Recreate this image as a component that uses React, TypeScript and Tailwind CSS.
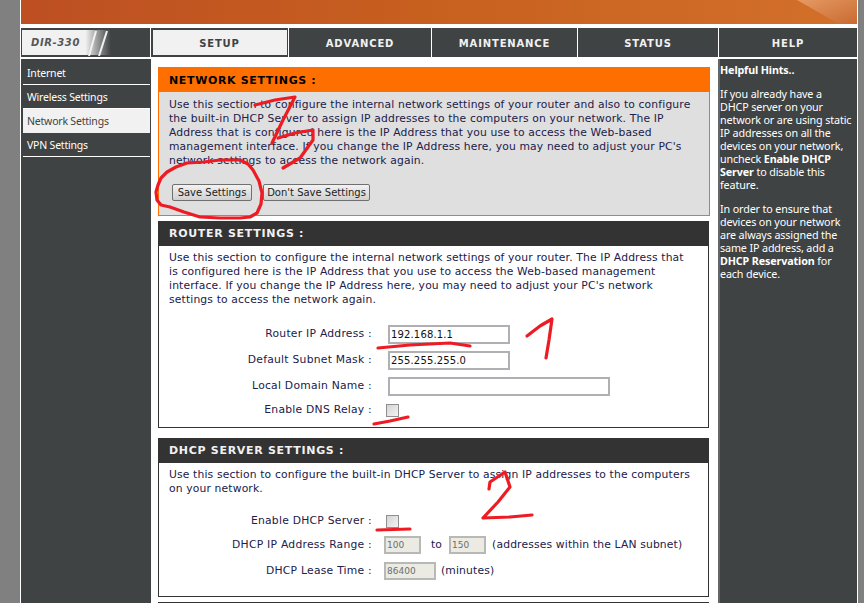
import React from "react";

const font = "font-['DejaVu_Sans',sans-serif]";

function Lines({ lines }: { lines: string[] }) {
  return (
    <>
      {lines.map((l) => (
        <span key={l} className="block whitespace-nowrap">{l}</span>
      ))}
    </>
  );
}

function NavItem({ label, w }: { label: string; w: string }) {
  return (
    <div className={`${w} flex items-center justify-center border-r border-white pt-[2px] text-[10px] font-bold tracking-[0.85px] text-[#f1f1f1]`}>
      {label}
    </div>
  );
}

function SideItem({ label, active }: { label: string; active?: boolean }) {
  return (
    <div className={`h-[24px] w-[127px] pl-[4px] pt-[1px] flex items-center border-b font-['Noto_Sans',sans-serif] text-[10.5px] tracking-[-0.2px] ${active ? "bg-[#f1f1f1] text-[#404343] border-[#f1f1f1]" : "text-white border-white"}`}>
      {label}
    </div>
  );
}

function FormRow({ label, h, ml = "ml-[14px]", children }: { label: string; h: string; ml?: string; children: React.ReactNode }) {
  return (
    <div className={`flex items-center ${h}`}>
      <div className="w-[215px] pr-[2px] text-right whitespace-nowrap tracking-[0.25px]">{label} :</div>
      <div className={`${ml} flex items-center`}>{children}</div>
    </div>
  );
}

function TextBox({ value, w }: { value?: string; w: string }) {
  return <div className={`${w} h-[19px] border-2 border-[#b0b0b4] bg-white pl-[1px] leading-[15px] text-[10px] tracking-[0.15px] text-[#111]`}>{value}</div>;
}

function Disabled({ value, w }: { value: string; w: string }) {
  return <div className={`${w} h-[18px] border-2 border-[#b8b8b4] bg-[#ebebe4] pl-[1px] leading-[15px] text-[9px] tracking-normal text-[#6d6d6d]`}>{value}</div>;
}

function Check() {
  return <div className="h-[13px] w-[13px] border border-[#8e8f8f] bg-gradient-to-br from-[#d4d4d4] to-[#f4f4f4]" />;
}

function Section({ title, className, children }: { title: string; className: string; children: React.ReactNode }) {
  return (
    <section className={`${className} w-[551px] border border-[#333] bg-white`}>
      <h2 className="-mx-px -mt-px box-content flex h-[24px] items-center bg-[#333] pl-[11px] pt-px text-[11px] font-bold tracking-[0.7px] text-[#f1f1f1]">{title}</h2>
      {children}
    </section>
  );
}

export default function App() {
  return (
    <div className={`${font} relative h-[603px] w-[864px] overflow-hidden bg-[#808080] text-[10.75px] leading-[14px] tracking-[0.15px] text-[#20204a]`}>
      <div className="ml-[20px] h-[603px] w-[838px] bg-white pl-[1px]">
        <div className="relative h-[24px] w-[836px] bg-gradient-to-r from-[#bd4f22] via-[#c8601f] to-[#d2702a]">
          <div className="absolute right-0 top-0 h-[24px] w-[60px] bg-gradient-to-br from-[#e59a62] to-[#c96a30] [clip-path:polygon(0_0,100%_0,100%_100%,70%_100%)]" />
        </div>
        <nav className="mt-[4px] flex h-[29px] w-[836px] bg-[#404343]">
          <div className="flex w-[130px] items-center border-r border-white pl-[1px] pr-[1px]">
            <div className="flex h-[25px] w-full items-center bg-gradient-to-r from-[#f1f1f1] from-[50%] to-[#404343] to-[70%] pl-[9px] pt-[1px] text-[10px] font-bold italic tracking-[0.6px] text-[#55575a]">
              DIR-330
              <svg width="30" height="25" viewBox="0 0 30 25" className="ml-[8px]">
                <path d="M1 25 8 0M11 25 19 0" stroke="#f1f1f1" strokeWidth="2" />
              </svg>
            </div>
          </div>
          <div className="flex w-[138px] items-center justify-center border-r border-white px-[1px]">
            <div className="flex h-[25px] w-[134px] items-center justify-center bg-[#f1f1f1] pt-[2px] text-[10px] font-bold tracking-[0.85px] text-[#404343]">SETUP</div>
          </div>
          <NavItem label="ADVANCED" w="w-[143px]" />
          <NavItem label="MAINTENANCE" w="w-[146px]" />
          <NavItem label="STATUS" w="w-[141px]" />
          <div className="flex w-[138px] items-center justify-center pt-[2px] text-[10px] font-bold tracking-[0.85px] text-[#f1f1f1]">HELP</div>
        </nav>
        <div className="mt-[2px] flex h-[544px] w-[836px]">
          <aside className="h-full w-[130px] border-r border-[#404343] bg-[#404343] pl-[2px] pt-[2px] text-white">
            <SideItem label="Internet" />
            <SideItem label="Wireless Settings" />
            <SideItem label="Network Settings" active />
            <SideItem label="VPN Settings" />
          </aside>
          <main className="h-full w-[567px] bg-white pl-[7px] pt-[8px]">
            <section className="h-[149px] w-[552px] border border-[#ff6f00] bg-[#dfdfdf]">
              <h2 className="-mx-px -mt-px flex h-[25px] items-center bg-[#ff6f00] pl-[11px] pt-[2px] text-[11px] font-bold tracking-[0.65px] text-black">NETWORK SETTINGS :</h2>
              <div className="pl-[10px] pt-[6px]">
                <Lines lines={[
                  "Use this section to configure the internal network settings of your router and also to configure",
                  "the built-in DHCP Server to assign IP addresses to the computers on your network. The IP",
                  "Address that is configured here is the IP Address that you use to access the Web-based",
                  "management interface. If you change the IP Address here, you may need to adjust your PC's",
                  "network settings to access the network again.",
                ]} />
                <div className="ml-[3px] mt-[16px] flex gap-[11px] text-[#222]">
                  <div className="flex h-[17px] w-[80px] items-center justify-center rounded-[2px] border border-[#707070] bg-gradient-to-b from-[#f2f2f2] to-[#d0d0d0] text-[10px] tracking-normal">Save Settings</div>
                  <div className="flex h-[17px] w-[107px] items-center justify-center rounded-[2px] border border-[#707070] bg-gradient-to-b from-[#f2f2f2] to-[#d0d0d0] text-[10px] tracking-normal">Don't Save Settings</div>
                </div>
              </div>
            </section>
            <Section title="ROUTER SETTINGS :" className="mt-[5px] h-[207px]">
              <div className="pl-[10px] pt-[5px]">
                <Lines lines={[
                  "Use this section to configure the internal network settings of your router. The IP Address that",
                  "is configured here is the IP Address that you use to access the Web-based management",
                  "interface. If you change the IP Address here, you may need to adjust your PC's network",
                  "settings to access the network again.",
                ]} />
              </div>
              <div className="mt-[14px]">
                <FormRow label="Router IP Address" h="h-[26px]"><TextBox value="192.168.1.1" w="w-[122px]" /></FormRow>
                <FormRow label="Default Subnet Mask" h="h-[26px]"><TextBox value="255.255.255.0" w="w-[122px]" /></FormRow>
                <FormRow label="Local Domain Name" h="h-[26px]"><TextBox w="w-[222px]" /></FormRow>
                <FormRow label="Enable DNS Relay" h="h-[22px]" ml="ml-[12px]"><Check /></FormRow>
              </div>
            </Section>
            <Section title="DHCP SERVER SETTINGS :" className="mt-[10px] h-[159px]">
              <div className="pl-[10px] pt-[5px]">
                <Lines lines={[
                  "Use this section to configure the built-in DHCP Server to assign IP addresses to the computers",
                  "on your network.",
                ]} />
              </div>
              <div className="mt-[14px]">
                <FormRow label="Enable DHCP Server" h="h-[22px]" ml="ml-[12px]"><Check /></FormRow>
                <FormRow label="DHCP IP Address Range" h="h-[26px]" ml="ml-[10px]">
                  <Disabled value="100" w="w-[37px]" />
                  <span className="ml-[10px] mr-[7px]">to</span>
                  <Disabled value="150" w="w-[37px]" />
                  <span className="ml-[6px] whitespace-nowrap">(addresses within the LAN subnet)</span>
                </FormRow>
                <FormRow label="DHCP Lease Time" h="h-[26px]" ml="ml-[10px]">
                  <Disabled value="86400" w="w-[52px]" />
                  <span className="ml-[5px]">(minutes)</span>
                </FormRow>
              </div>
            </Section>
            <div className="mt-[5px] h-[10px] w-[551px] bg-[#333]" />
          </main>
          <aside className="h-full w-[139px] border-l-2 border-[#666] bg-[#404343] pt-[5px] font-['Noto_Sans',sans-serif] text-[10.75px] leading-[13px] tracking-[-0.13px] text-white">
            <p className="font-bold">Helpful Hints..</p>
            <p className="mt-[11px]">
              <span className="block whitespace-nowrap">If you already have a</span>
              <span className="block whitespace-nowrap">DHCP server on your</span>
              <span className="block whitespace-nowrap">network or are using static</span>
              <span className="block whitespace-nowrap">IP addresses on all the</span>
              <span className="block whitespace-nowrap">devices on your network,</span>
              <span className="block whitespace-nowrap">uncheck <b>Enable DHCP</b></span>
              <span className="block whitespace-nowrap"><b>Server</b> to disable this</span>
              <span className="block whitespace-nowrap">feature.</span>
            </p>
            <p className="mt-[11px]">
              <span className="block whitespace-nowrap">In order to ensure that</span>
              <span className="block whitespace-nowrap">devices on your network</span>
              <span className="block whitespace-nowrap">are always assigned the</span>
              <span className="block whitespace-nowrap">same IP address, add a</span>
              <span className="block whitespace-nowrap"><b>DHCP Reservation</b> for</span>
              <span className="block whitespace-nowrap">each device.</span>
            </p>
          </aside>
        </div>
      </div>
      <svg className="pointer-events-none absolute left-0 top-0" width="864" height="603" fill="none" stroke="#ed1c24" strokeWidth="3.2" strokeLinecap="round" strokeLinejoin="round">
        <path d="M255 105 275 100 295 97 283 120 272 143" />
        <path d="M278 138 295 133 313 130 313 140 300 158 283 168" />
        <path d="M167 172 176 167 187 163 204 162 220 160 240 160 248 164 253 170 259 181 262 193 261 204 257 213 250 217 240 218 220 218 200 217 184 212 170 207 161 205 157 200 156 192 158 185 161 178 167 172" />
        <path d="M378 348 410 345 450 343 470 346" />
        <path d="M374 424 390 421 408 417" />
        <path d="M377 530 410 529" />
        <path d="M527 336 540 326 552 319 549 340 546 358" />
        <path d="M489 489 490 482 505 472 510 487 498 502 483 518 510 517 532 515" />
      </svg>
    </div>
  );
}
